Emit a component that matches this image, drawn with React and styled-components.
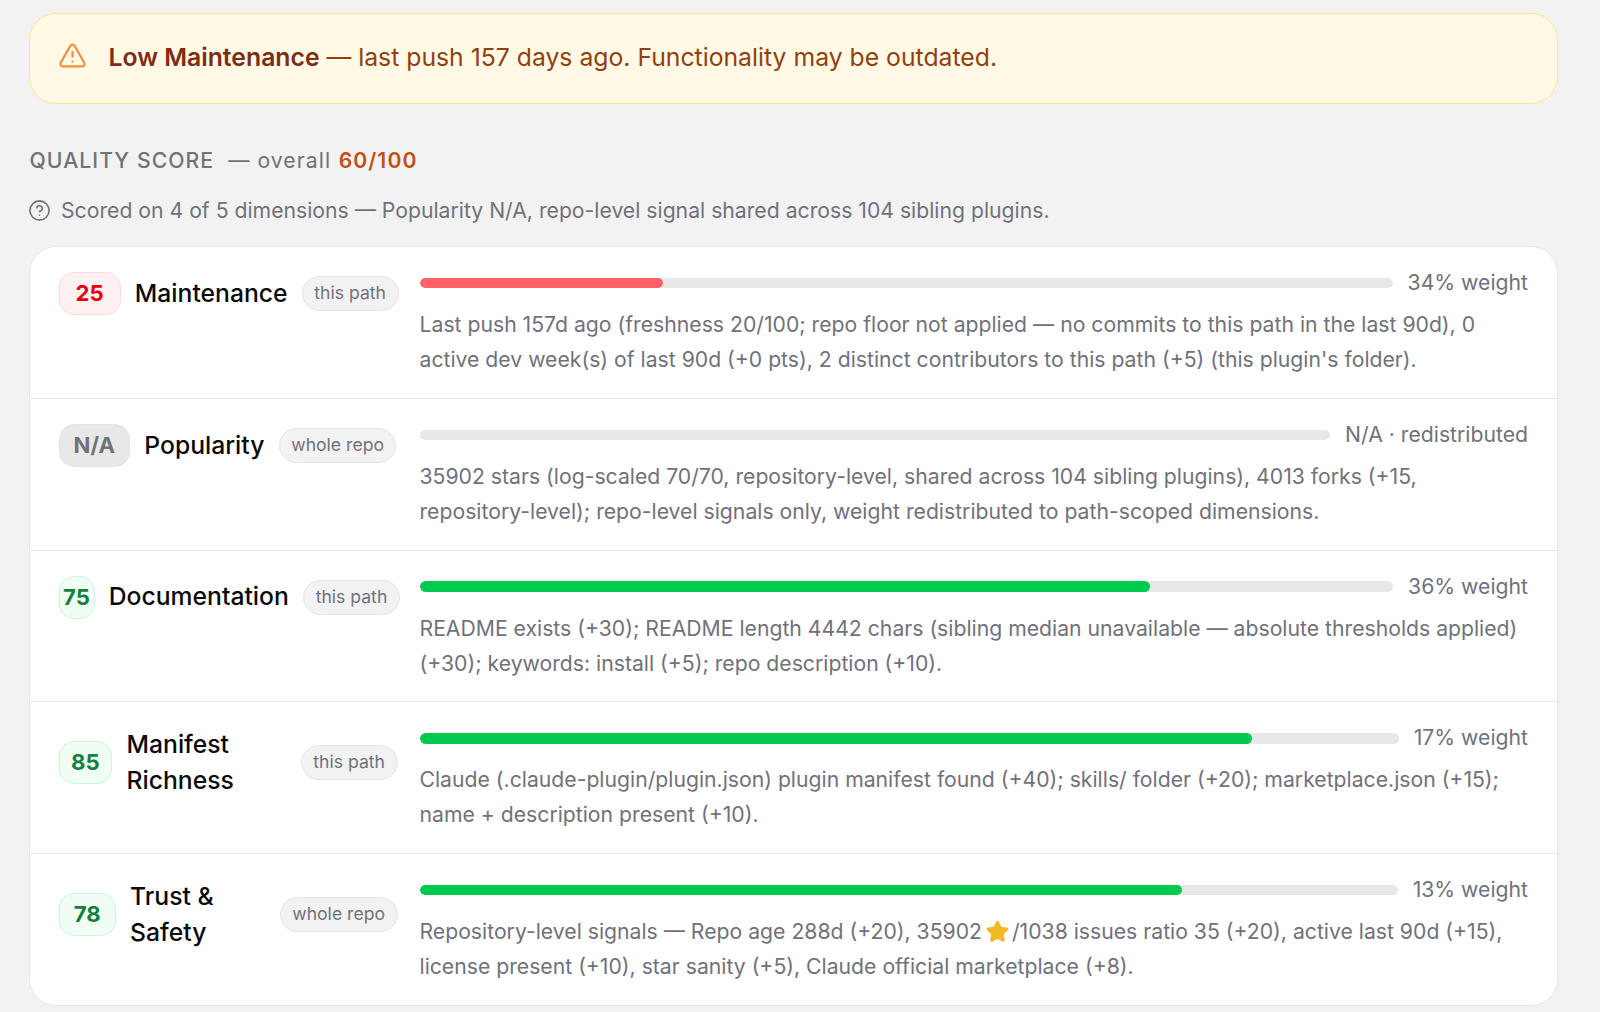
import styled, { createGlobalStyle } from "styled-components";
import { TriangleAlert, CircleHelp } from "lucide-react";

const GlobalStyle = createGlobalStyle`
  html, body {
    margin: 0;
    padding: 0;
    background: #f2f2f2;
  }
  * {
    box-sizing: border-box;
  }
`;

const tones = {
  red: { bg: "#fff1f2", border: "#ffd6db", text: "#e7000b", bar: "#ff6166" },
  green: { bg: "#f0fdf4", border: "#c9f5d9", text: "#15803d", bar: "#00c950" },
  gray: { bg: "#e8e8e8", border: "#e5e5e5", text: "#71717a", bar: "#e8e8e8" },
};

const Page = styled.div`
  width: 1600px;
  height: 1012px;
  overflow: hidden;
  padding: 13px 42.5px 0 29px;
  background: #f2f2f2;
  font-family: Inter, "Liberation Sans", sans-serif;
`;

const Banner = styled.div`
  display: flex;
  align-items: center;
  gap: 22px;
  height: 91px;
  padding: 0 27.5px 3px;
  background: #fff9e6;
  border: 1.5px solid #fde68a;
  border-radius: 27px;

  svg {
    flex-shrink: 0;
    margin-bottom: 4px;
  }
`;

const BannerText = styled.div`
  font-size: 24.75px;
  color: #92400e;

  strong {
    font-weight: 600;
    color: #7c2d12;
  }
`;

const Heading = styled.div`
  display: flex;
  align-items: center;
  gap: 7.5px;
  margin-top: 41px;
  padding-left: 0.5px;
  height: 30px;
  font-size: 21.2px;
  letter-spacing: 1.06px;
  color: #71717a;
`;

const HeadingLabel = styled.span`
  font-weight: 500;
  margin-right: 6.5px;
`;

const Overall = styled.span`
  font-weight: 600;
  color: #c24e14;
`;

const Note = styled.div`
  display: flex;
  align-items: center;
  gap: 10px;
  margin-top: 20px;
  padding-left: 0.5px;
  height: 30px;
  font-size: 21.2px;
  color: #71717a;

  svg {
    margin-left: -1.5px;
  }
`;

const Card = styled.div`
  margin-top: 21px;
  background: #fff;
  border: 1.5px solid #e8e8e8;
  border-radius: 27px;
  overflow: hidden;
`;

const Row = styled.div`
  display: grid;
  grid-template-columns: 339px 1fr;
  column-gap: 22px;
  align-items: start;
  padding: 21px 28.5px 20.8px;
  border-bottom: 1.5px solid #e8e8e8;

  &:last-child {
    border-bottom: none;
  }
`;

const Left = styled.div`
  display: flex;
  align-items: center;
  gap: 14.3px;
  padding-top: 4px;
`;

const Score = styled.span`
  flex-shrink: 0;
  width: ${(p) => p.$width}px;
  height: 43px;
  line-height: 40px;
  text-align: center;
  font-size: 22.2px;
  font-weight: 700;
  color: ${(p) => tones[p.$tone].text};
  background: ${(p) => tones[p.$tone].bg};
  border: 1.5px solid ${(p) => tones[p.$tone].border};
  border-radius: 15px;
`;

const Name = styled.span`
  font-size: 24.7px;
  font-weight: 500;
  line-height: 35.5px;
  color: #0a0a0a;
`;

const Scope = styled.span`
  flex-shrink: 0;
  padding: 0 11.5px;
  height: 35px;
  line-height: 32px;
  white-space: nowrap;
  font-size: 17.6px;
  color: #71717a;
  background: #f2f2f2;
  border: 1.5px solid #e5e5e5;
  border-radius: 18px;
`;

const Right = styled.div`
  min-width: 0;
`;

const BarLine = styled.div`
  display: flex;
  align-items: center;
  gap: 15px;
  height: 30px;
`;

const Track = styled.div`
  flex: 1;
  height: 10.6px;
  background: #e8e8e8;
  border-radius: 6px;
  overflow: hidden;
`;

const Fill = styled.div`
  height: 100%;
  border-radius: 6px;
  background: ${(p) => tones[p.$tone].bar};
`;

const Weight = styled.span`
  padding-bottom: 2px;
  font-size: 21.2px;
  color: #71717a;
  white-space: nowrap;
`;

const Detail = styled.p`
  margin: 9px 0 0;
  font-size: 21.2px;
  line-height: 35px;
  color: #71717a;
`;

const Star = styled.svg`
  width: 25px;
  height: 25px;
  margin: 0 1.5px 0 3.5px;
  vertical-align: -5px;
`;

const dimensions = [
  {
    score: "25",
    badgeWidth: 62,
    tone: "red",
    name: "Maintenance",
    scope: "this path",
    fill: 25,
    weight: "34% weight",
    detail: (
      <>
        Last push 157d ago (freshness 20/100; repo floor not applied — no commits to this path in the last 90d), 0
        active dev week(s) of last 90d (+0 pts), 2 distinct contributors to this path (+5) (this plugin's folder).
      </>
    ),
  },
  {
    score: "N/A",
    badgeWidth: 71.5,
    tone: "gray",
    name: "Popularity",
    scope: "whole repo",
    fill: 0,
    weight: "N/A · redistributed",
    detail: (
      <>
        35902 stars (log-scaled 70/70, repository-level, shared across 104 sibling plugins), 4013 forks (+15,
        repository-level); repo-level signals only, weight redistributed to path-scoped dimensions.
      </>
    ),
  },
  {
    score: "75",
    badgeWidth: 36,
    tone: "green",
    name: "Documentation",
    scope: "this path",
    fill: 75,
    weight: "36% weight",
    detail: (
      <>
        README exists (+30); README length 4442 chars (sibling median unavailable — absolute thresholds applied)
        (+30); keywords: install (+5); repo description (+10).
      </>
    ),
  },
  {
    score: "85",
    badgeWidth: 53.7,
    tone: "green",
    name: "Manifest Richness",
    scope: "this path",
    fill: 85,
    weight: "17% weight",
    detail: (
      <>
        Claude (.claude-plugin/plugin.json) plugin manifest found (+40); skills/ folder (+20); marketplace.json (+15);
        name + description present (+10).
      </>
    ),
  },
  {
    score: "78",
    badgeWidth: 57.3,
    tone: "green",
    name: "Trust & Safety",
    scope: "whole repo",
    fill: 78,
    weight: "13% weight",
    detail: (
      <>
        Repository-level signals — Repo age 288d (+20), 35902
        <Star viewBox="0 0 24 24">
          <path
            d="M12 3.2l2.7 5.7 6.2.8-4.5 4.4 1.1 6.2L12 17.3l-5.5 3 1.1-6.2-4.5-4.4 6.2-.8z"
            fill="#f4b922"
            stroke="#f4b922"
            strokeWidth="3"
            strokeLinejoin="round"
          />
        </Star>
        /1038 issues ratio 35 (+20), active last 90d (+15), license present (+10), star sanity (+5), Claude official
        marketplace (+8).
      </>
    ),
  },
];

export default function App() {
  return (
    <Page>
      <GlobalStyle />
      <Banner>
        <TriangleAlert size={29} color="#f98c3c" strokeWidth={1.8} />
        <BannerText>
          <strong>Low Maintenance</strong> — last push 157 days ago. Functionality may be outdated.
        </BannerText>
      </Banner>

      <Heading>
        <HeadingLabel>QUALITY SCORE</HeadingLabel>
        <span>— overall</span>
        <Overall>60/100</Overall>
      </Heading>

      <Note>
        <CircleHelp size={23} color="#71717a" strokeWidth={1.7} />
        Scored on 4 of 5 dimensions — Popularity N/A, repo-level signal shared across 104 sibling plugins.
      </Note>

      <Card>
        {dimensions.map((item) => (
          <Row key={item.name}>
            <Left>
              <Score $tone={item.tone} $width={item.badgeWidth}>
                {item.score}
              </Score>
              <Name>{item.name}</Name>
              <Scope>{item.scope}</Scope>
            </Left>
            <Right>
              <BarLine>
                <Track>
                  <Fill $tone={item.tone} style={{ width: `${item.fill}%` }} />
                </Track>
                <Weight>{item.weight}</Weight>
              </BarLine>
              <Detail>{item.detail}</Detail>
            </Right>
          </Row>
        ))}
      </Card>
    </Page>
  );
}
